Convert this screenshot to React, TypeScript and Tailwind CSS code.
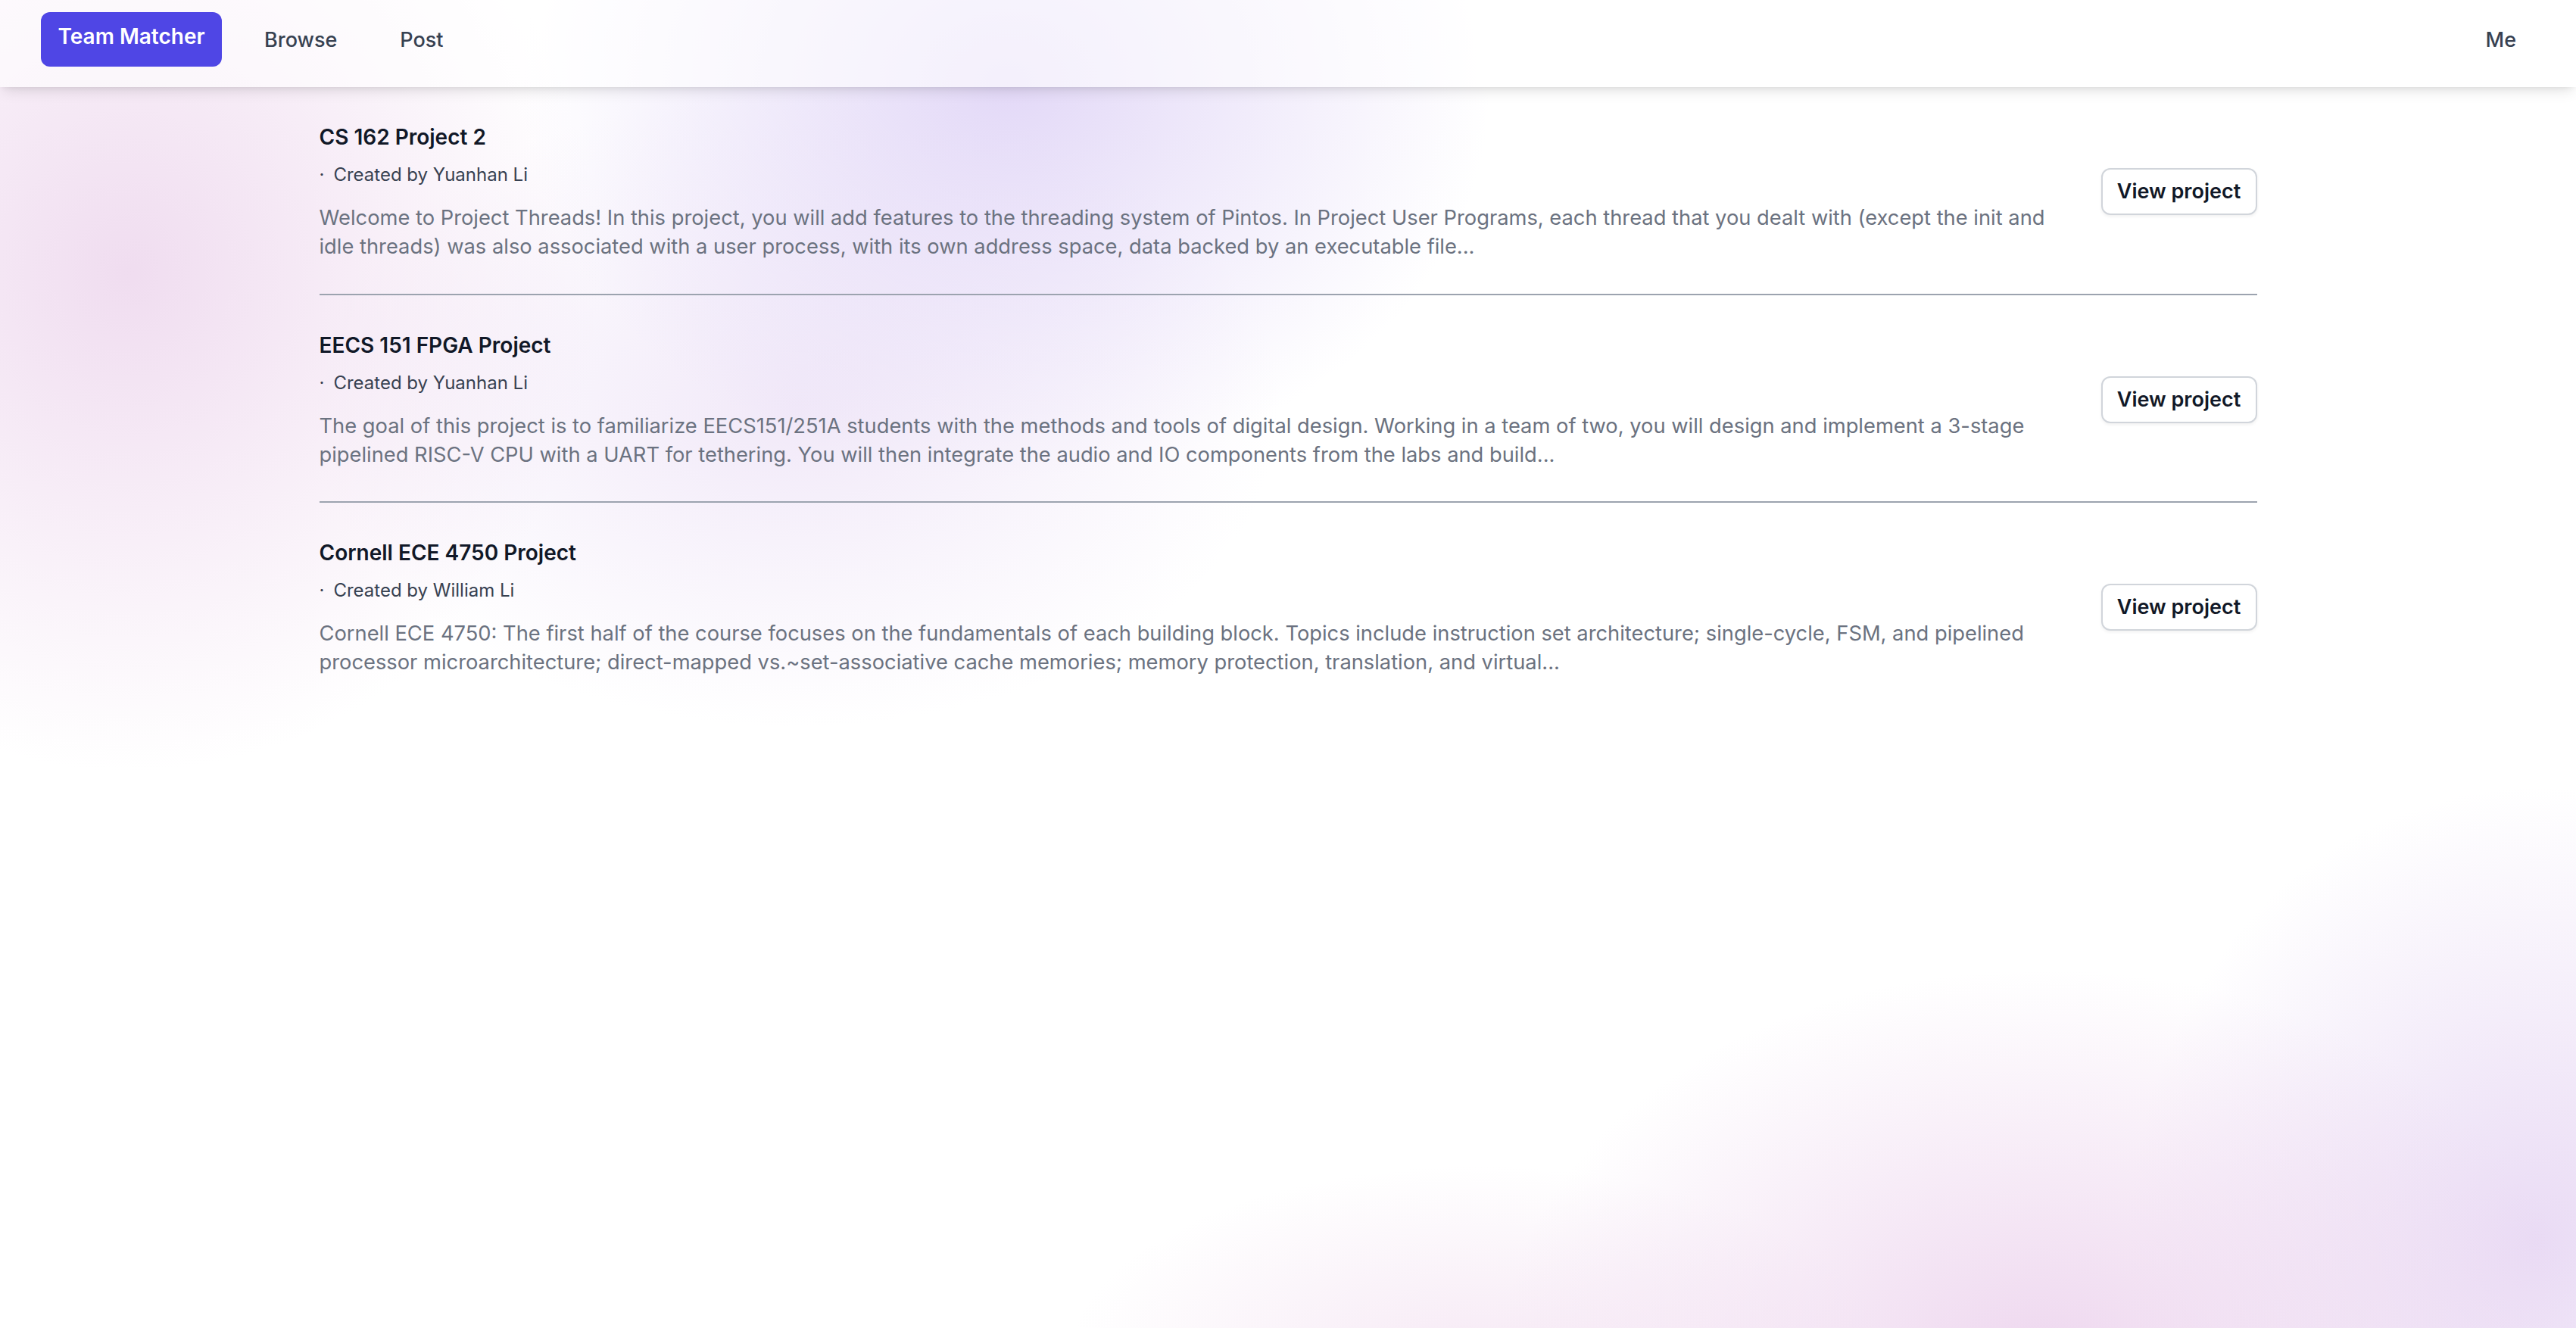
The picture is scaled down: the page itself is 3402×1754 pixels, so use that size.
import React from "react";

type Project = {
  id: number;
  title: string;
  author: string;
  summary: string;
};

const projects: Project[] = [
  {
    id: 1,
    title: "CS 162 Project 2",
    author: "Yuanhan Li",
    summary:
      "Welcome to Project Threads! In this project, you will add features to the threading system of Pintos. In Project User Programs, each thread that you dealt with (except the init and idle threads) was also associated with a user process, with its own address space, data backed by an executable file...",
  },
  {
    id: 2,
    title: "EECS 151 FPGA Project",
    author: "Yuanhan Li",
    summary:
      "The goal of this project is to familiarize EECS151/251A students with the methods and tools of digital design. Working in a team of two, you will design and implement a 3-stage pipelined RISC-V CPU with a UART for tethering. You will then integrate the audio and IO components from the labs and build...",
  },
  {
    id: 3,
    title: "Cornell ECE 4750 Project",
    author: "William Li",
    summary:
      "Cornell ECE 4750: The first half of the course focuses on the fundamentals of each building block. Topics include instruction set architecture; single-cycle, FSM, and pipelined processor microarchitecture; direct-mapped vs.~set-associative cache memories; memory protection, translation, and virtual...",
  },
];

const NavBar = () => {
  return (
    <nav className="relative z-10 flex h-[115px] items-start justify-between bg-white/60 px-[54px] pt-[16px] shadow-[0_8px_18px_-4px_rgba(0,0,0,0.12),0_4px_8px_-4px_rgba(0,0,0,0.08)]">
      <div className="flex items-center gap-[56px]">
        {/* Brand */}
        <a className="flex h-[72px] w-[239px] items-center justify-center rounded-[12px] bg-[#4f46e5] pb-[8px] text-[28px] font-semibold text-white">
          Team Matcher
        </a>
        <div className="flex items-center gap-[83px]">
          <a className="pt-[2px] text-[27px] font-medium text-[#374151]">Browse</a>
          <a className="pt-[2px] text-[27px] font-medium text-[#374151]">Post</a>
        </div>
      </div>
      <a className="flex h-[72px] items-center px-[25px] pt-[2px] text-[27px] font-medium text-[#374151]">
        Me
      </a>
    </nav>
  );
};

const ProjectRow = ({ project }: { project: Project }) => {
  return (
    <div className="flex items-center justify-between gap-[48px] border-b-2 border-[#9ca3af] pt-[46px] pb-[42px] last:border-b-0">
      <div className="min-w-0 flex-1">
        <h3 className="text-[28px] leading-[40px] font-semibold text-[#111827]">{project.title}</h3>
        <div className="mt-[14px] flex items-center gap-[12px] text-[24px] leading-[32px] text-[#374151]">
          <span>·</span>
          <span>Created by {project.author}</span>
        </div>
        <p className="mt-[22px] text-[27.3px] leading-[38.3px] text-[#6b7280]">{project.summary}</p>
      </div>
      <button className="h-[62px] w-[206px] shrink-0 rounded-[12px] border-2 border-[#d1d5db] bg-white text-[27px] font-semibold text-[#111827] shadow-[0_2px_4px_rgba(0,0,0,0.06)]">
        View project
      </button>
    </div>
  );
};

export default function App() {
  return (
    <div
      className="min-h-screen w-full bg-white font-['Inter','Noto_Sans',sans-serif] [background-image:radial-gradient(620px_660px_at_170px_360px,rgba(236,212,236,0.8),transparent),radial-gradient(640px_520px_at_1330px_110px,rgba(222,210,246,0.85),transparent),radial-gradient(640px_420px_at_1050px_540px,rgba(232,218,244,0.6),transparent),radial-gradient(720px_520px_at_2700px_1800px,rgba(235,208,236,0.85),transparent),radial-gradient(540px_600px_at_3350px_1640px,rgba(228,210,242,0.8),transparent),radial-gradient(540px_260px_at_1950px_1800px,rgba(240,218,238,0.6),transparent)]"
    >
      <NavBar />
      <main className="mx-auto w-[2559px]">
        {projects.map((p) => (
          <ProjectRow key={p.id} project={p} />
        ))}
      </main>
    </div>
  );
}
